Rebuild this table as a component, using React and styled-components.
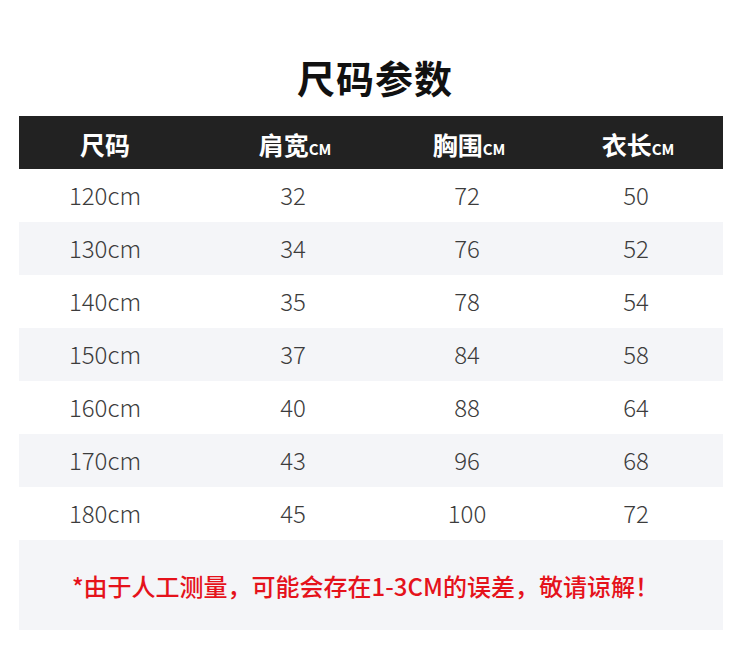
import styled, { createGlobalStyle } from "styled-components";

const GlobalStyle = createGlobalStyle`
  html, body {
    margin: 0;
    padding: 0;
    background: #ffffff;
  }
  body {
    font-family: "Noto Sans CJK SC", "Noto Sans", sans-serif;
  }
`;

const Page = styled.div`
  width: 750px;
  height: 652px;
  padding: 0 27px 0 19px;
  box-sizing: border-box;
  display: flex;
  flex-direction: column;
`;

const Title = styled.h1`
  margin: 0 -27px 0 -19px;
  height: 116px;
  display: flex;
  align-items: center;
  justify-content: center;
  padding-top: 36px;
  box-sizing: border-box;
  font-size: 38px;
  font-weight: 700;
  color: #111;
  letter-spacing: 1px;
`;

const Row = styled.div`
  display: grid;
  grid-template-columns: 172px 202px 148px 182px;
  height: 53px;
  align-items: center;
  background: ${(p) => (p.$head ? "#222222" : p.$shaded ? "#f4f5f8" : "#ffffff")};
`;

const HeadCell = styled.div`
  text-align: center;
  color: #fff;
  font-size: 25px;
  font-weight: 700;
  padding-top: 2px;
  padding-left: ${(p) => p.$shift || 0}px;
`;

const Unit = styled.span`
  font-size: 15px;
  font-weight: 700;
`;

const Cell = styled.div`
  text-align: center;
  color: #3c3c3c;
  font-size: 24px;
  font-weight: 300;
  padding-left: ${(p) => p.$shift || 0}px;
  margin-top: -2px;
`;

const Note = styled.div`
  height: 90px;
  background: #f4f5f8;
  display: flex;
  align-items: center;
  padding-left: 53px;
  color: #e5121b;
  font-size: 24px;
  font-weight: 500;
`;

const rows = [
  ["120cm", 32, 72, 50],
  ["130cm", 34, 76, 52],
  ["140cm", 35, 78, 54],
  ["150cm", 37, 84, 58],
  ["160cm", 40, 88, 64],
  ["170cm", 43, 96, 68],
  ["180cm", 45, 100, 72],
];

const shifts = [0, 2, 0, 8];

export default function App() {
  return (
    <Page>
      <GlobalStyle />
      <Title>尺码参数</Title>
      <Row $head>
        <HeadCell>尺码</HeadCell>
        <HeadCell $shift={6}>
          肩宽<Unit>CM</Unit>
        </HeadCell>
        <HeadCell $shift={4}>
          胸围<Unit>CM</Unit>
        </HeadCell>
        <HeadCell $shift={12}>
          衣长<Unit>CM</Unit>
        </HeadCell>
      </Row>
      {rows.map((r, i) => (
        <Row key={r[0]} $shaded={i % 2 === 1}>
          {r.map((v, j) => (
            <Cell key={j} $shift={shifts[j]}>
              {v}
            </Cell>
          ))}
        </Row>
      ))}
      <Note>*由于人工测量，可能会存在1-3CM的误差，敬请谅解！</Note>
    </Page>
  );
}
